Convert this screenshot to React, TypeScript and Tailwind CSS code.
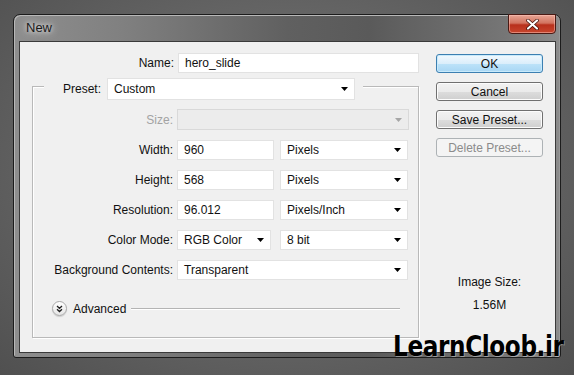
import React from "react";

const Arrow = ({ disabled }: { disabled?: boolean }) => (
  <svg width="7" height="4" viewBox="0 0 7 4" className="shrink-0">
    <path d="M0 0H7L3.5 4Z" fill={disabled ? "#a6a6a6" : "#000"} />
  </svg>
);

function Select({ className, value, disabled }: { className: string; value?: string; disabled?: boolean }) {
  return (
    <div
      className={
        "flex items-center justify-between pl-[6px] pr-[6px] border " +
        (disabled ? "bg-[#ececec] border-[#d9d9d9] " : "bg-white border-[#e2e2e2] ") +
        className
      }
    >
      <span>{value}</span>
      <Arrow disabled={disabled} />
    </div>
  );
}

function Input({ className, value }: { className: string; value: string }) {
  return (
    <div className={"flex items-center pl-[6px] bg-white border border-[#e2e2e2] " + className}>
      {value}
    </div>
  );
}

function Btn({ children, primary, disabled }: { children: React.ReactNode; primary?: boolean; disabled?: boolean }) {
  const cls = primary
    ? "border-[#3c7fb1] bg-[linear-gradient(180deg,#f2f9fe_0%,#dbeefb_50%,#bde3f9_51%,#a8d6f4_100%)] shadow-[inset_0_0_0_1px_#c8eafb]"
    : disabled
    ? "border-[#adb2b5] bg-[#f4f4f4] text-[#8b8b8b]"
    : "border-[#707070] bg-[linear-gradient(180deg,#f2f2f2_0%,#ebebeb_50%,#dddddd_51%,#cfcfcf_100%)] shadow-[inset_0_0_0_1px_#fcfcfc]";
  return (
    <div className={"h-[19px] w-[107px] rounded-[3px] border flex items-center justify-center " + cls}>
      {children}
    </div>
  );
}

export default function App() {
  return (
    <div className="relative w-[574px] h-[375px] overflow-hidden pt-[14px] pl-[13px] bg-[radial-gradient(ellipse_at_50%_45%,#7c7c7c_0%,#686868_45%,#505050_100%)] font-['Liberation_Sans',Arial,sans-serif] text-[12px] text-[#111]">
      <div className="relative w-[548px] h-[344px] rounded-t-[7px] rounded-b-[3px] border border-[#1c1c1c] pl-[5px] pr-[4px] pb-[4px] flex flex-col bg-[linear-gradient(90deg,#8e8e8e_0%,#808080_20%,#606060_50%,#5a5a5a_65%,#767676_90%,#8c8c8c_100%)] shadow-[inset_1px_1px_0_#b8b8b8,inset_-1px_0_0_#9a9a9a]">
        <div className="h-[26px] flex items-center pl-[7px] text-[13px] text-[#1a1a1a] [text-shadow:0_0_8px_rgba(255,255,255,0.9),0_0_4px_rgba(255,255,255,0.6)]">
          New
        </div>
        <div className="absolute right-[4px] top-[-1px] w-[48px] h-[20px] rounded-b-[4px] border border-[#4a1a14] bg-[linear-gradient(180deg,#e7a595_0%,#d2735f_45%,#b8301c_55%,#c8462e_100%)] flex items-center justify-center shadow-[inset_0_0_0_1px_rgba(255,200,190,0.5)]">
          <svg width="13" height="11" viewBox="0 0 13 11">
            <path d="M2 1.5L11 9.5M11 1.5L2 9.5" stroke="#3a0a05" strokeWidth="3.6" strokeLinecap="round" />
            <path d="M2 1.5L11 9.5M11 1.5L2 9.5" stroke="#fff" strokeWidth="2.2" strokeLinecap="round" />
          </svg>
        </div>

        <div className="w-[537px] h-[312px] border border-[#3a3a3a] bg-[#f0f0f0] flex">
          {/* left column */}
          <div className="w-[400px] pt-[11px]">
            <div className="flex items-center h-[20px]">
              <div className="w-[154px] text-right">Name:</div>
              <Input className="ml-[4px] w-[241px] h-[20px]" value="hero_slide" />
            </div>

            <div className="mt-[13px] ml-[12px] w-[387px] h-[252px] border border-[#b9b9b9] shadow-[1px_1px_0_#ffffff,inset_1px_1px_0_#ffffff]">
              <div className="-mt-[9px] ml-[11px] w-[319px] h-[22px] flex items-center bg-[#f0f0f0]">
                <div className="w-[57px] text-right">Preset:</div>
                <Select className="ml-[6px] w-[248px] h-[22px]" value="Custom" />
              </div>

              <div className="flex items-center mt-[9px] h-[21px]">
                <div className="w-[140px] text-right text-[#a3a3a3]">Size:</div>
                <Select className="ml-[4px] w-[232px] h-[21px]" disabled />
              </div>

              <div className="flex items-center mt-[10px] h-[20px]">
                <div className="w-[140px] text-right">Width:</div>
                <Input className="ml-[4px] w-[97px] h-[20px]" value="960" />
                <Select className="ml-[6px] w-[128px] h-[20px]" value="Pixels" />
              </div>

              <div className="flex items-center mt-[10px] h-[20px]">
                <div className="w-[140px] text-right">Height:</div>
                <Input className="ml-[4px] w-[97px] h-[20px]" value="568" />
                <Select className="ml-[6px] w-[128px] h-[20px]" value="Pixels" />
              </div>

              <div className="flex items-center mt-[10px] h-[20px]">
                <div className="w-[140px] text-right">Resolution:</div>
                <Input className="ml-[4px] w-[97px] h-[20px]" value="96.012" />
                <Select className="ml-[6px] w-[128px] h-[20px]" value="Pixels/Inch" />
              </div>

              <div className="flex items-center mt-[10px] h-[20px]">
                <div className="w-[140px] text-right">Color Mode:</div>
                <Select className="ml-[4px] w-[94px] h-[20px]" value="RGB Color" />
                <Select className="ml-[9px] w-[128px] h-[20px]" value="8 bit" />
              </div>

              <div className="flex items-center mt-[10px] h-[20px]">
                <div className="w-[140px] text-right">Background Contents:</div>
                <Select className="ml-[4px] w-[231px] h-[20px]" value="Transparent" />
              </div>

              <div className="flex items-center mt-[21px] h-[15px] pl-[19px] pr-[18px]">
                <div className="w-[15px] h-[15px] rounded-full border border-[#a8a8a8] bg-[linear-gradient(180deg,#ffffff_0%,#e6e6e6_100%)] flex items-center justify-center shadow-[0_1px_1px_rgba(0,0,0,0.15)]">
                  <svg width="7" height="8" viewBox="0 0 7 8">
                    <path d="M1 1L3.5 3.3L6 1M1 4.3L3.5 6.6L6 4.3" stroke="#222" strokeWidth="1.3" fill="none" />
                  </svg>
                </div>
                <div className="ml-[6px]">Advanced</div>
                <div className="ml-[5px] flex-1 h-px bg-[#b4b4b4] shadow-[0_1px_0_#fff]" />
              </div>
            </div>
          </div>

          {/* right column */}
          <div className="ml-[16px] w-[107px] pt-[12px] flex flex-col">
            <div className="flex flex-col gap-[9px]">
              <Btn primary>OK</Btn>
              <Btn>Cancel</Btn>
              <Btn>Save Preset...</Btn>
              <Btn disabled>Delete Preset...</Btn>
            </div>
            <div className="mt-[117px] leading-[16px] text-center">Image Size:</div>
            <div className="mt-[7px] leading-[16px] text-center">1.56M</div>
          </div>
        </div>
      </div>

      <div className="absolute left-[393px] top-[328px] font-['DejaVu_Sans',sans-serif] font-bold text-[29px] leading-[36px] text-black tracking-[-0.5px] origin-left scale-x-[0.8] [text-shadow:1px_1px_0_rgba(255,255,255,0.35)]">
        LearnCloob.ir
      </div>
    </div>
  );
}
